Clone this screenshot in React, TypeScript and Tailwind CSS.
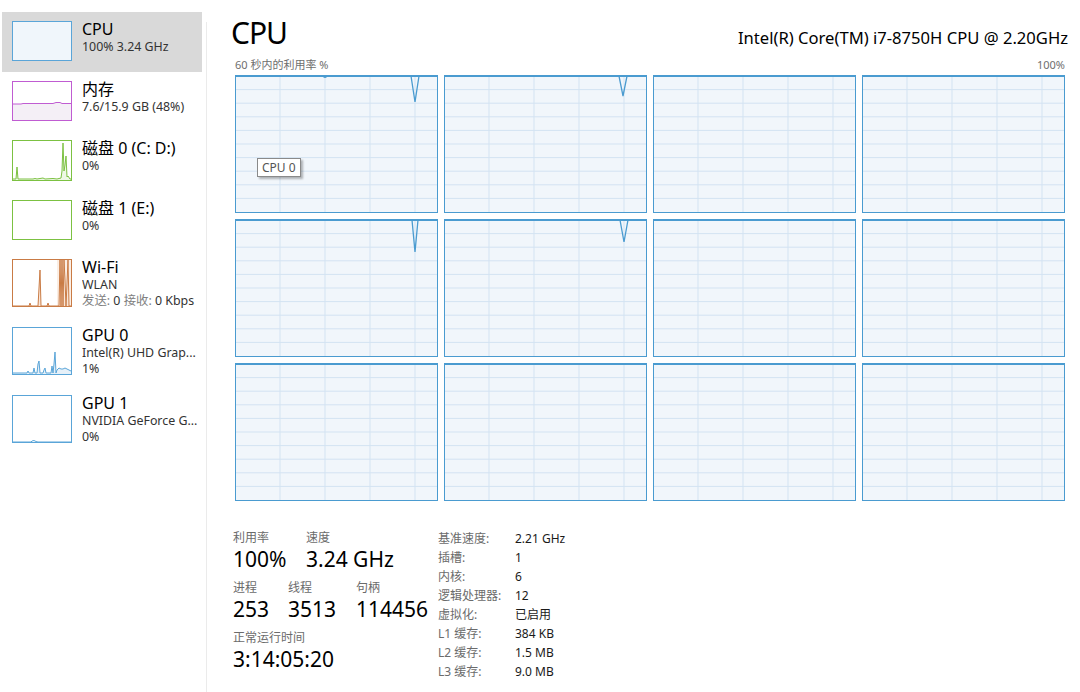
import React from 'react';

const FONT = "'Noto Sans', 'Noto Sans CJK SC', sans-serif";

type Dip = { x: number; depth: number; half: number };

const cells: { dip?: Dip; blip?: number }[] = [
  { dip: { x: 179, depth: 26, half: 4 }, blip: 89 },
  { dip: { x: 178, depth: 20, half: 4 } },
  {},
  {},
  { dip: { x: 179, depth: 32, half: 3 } },
  { dip: { x: 179, depth: 22, half: 4 } },
  {},
  {},
  {},
  {},
  {},
  {},
];

const GraphCell = ({ dip, blip, tooltip }: { dip?: Dip; blip?: number; tooltip?: boolean }) => {
  const hLines = [1, 2, 3, 4, 5, 6, 7, 8, 9].map((k) => (136 * k) / 10);
  const vLines = [44, 89, 134, 179];
  return (
    <div className="relative h-[138px] border border-[#4a9bd0] bg-[#f1f6fb]">
      <svg width="201" height="136" viewBox="0 0 201 136" className="block">
        {hLines.map((y) => (
          <line key={y} x1="0" x2="201" y1={y} y2={y} stroke="#d3e3f2" strokeWidth="1" />
        ))}
        {vLines.map((x) => (
          <line key={x} x1={x} x2={x} y1="0" y2="136" stroke="#d3e3f2" strokeWidth="1" />
        ))}
        <line x1="0" x2="201" y1="0.5" y2="0.5" stroke="#4a9bd0" strokeWidth="1" />
        {dip && (
          <polyline
            points={`${dip.x - dip.half},0 ${dip.x},${dip.depth} ${dip.x + dip.half},0`}
            fill="none"
            stroke="#4a9bd0"
            strokeWidth="1.3"
          />
        )}
        {blip && <path d={`M${blip - 3} 0 Q${blip} 3 ${blip + 3} 0`} fill="#4a9bd0" stroke="#4a9bd0" strokeWidth="1" />}
      </svg>
      {tooltip && (
        <div className="absolute left-[21px] top-[82px] border border-[#8a8a8a] bg-white px-[4px] text-[12px] leading-[17px] text-[#555] shadow-[2px_2px_2px_rgba(0,0,0,0.28)]">
          CPU 0
        </div>
      )}
    </div>
  );
};

const palette: Record<string, { border: string; fill: string }> = {
  cpu: { border: '#5aa5d8', fill: '#eef5fb' },
  mem: { border: '#c05cd2', fill: '#f4eff6' },
  disk0: { border: '#7cc142', fill: '#eef8e6' },
  disk1: { border: '#7cc142', fill: '#eef8e6' },
  wifi: { border: '#c97b45', fill: '#f9e6d8' },
  gpu0: { border: '#5aa5d8', fill: '#e6f0f8' },
  gpu1: { border: '#5aa5d8', fill: '#e6f0f8' },
};

const Thumb = ({ kind, h }: { kind: string; h: number }) => {
  const ih = h - 2;
  const c = palette[kind];
  let content: React.ReactNode = null;
  if (kind === 'mem') {
    content = (
      <>
        <path d={`M0 22 L8 22 L10 21.5 L40 21.5 L43 20.5 L47 20.5 L49 21.5 L58 21.5 L58 ${ih} L0 ${ih} Z`} fill={c.fill} />
        <polyline points="0,22 8,22 10,21.5 40,21.5 43,20.5 47,20.5 49,21.5 58,21.5" fill="none" stroke={c.border} strokeWidth="1" />
      </>
    );
  }
  if (kind === 'disk0') {
    const pts = '0,38 3,38 4,26 5,38 20,38 22,37.5 24,38 30,37 32,38 40,37.5 44,38 48,37 49,30 50,2 51,30 52,24 53,15 54,36 55,35 57,38 58,38';
    content = (
      <>
        <polygon points={`${pts} 58,39 0,39`} fill={c.fill} />
        <polyline points={pts} fill="none" stroke={c.border} strokeWidth="1" />
      </>
    );
  }
  if (kind === 'wifi') {
    const pts = '0,46 16,46 17,43 18,46 25,46 27,10 28,46 34,46 35,43 36,46 46,46 47,0 48,46 49,0 50,46 51,0 52,20 53,46 55,0 56,46 58,46';
    content = (
      <>
        <rect x="44" y="0" width="14" height="46" fill="#fbeee4" />
        <polygon points={`${pts} 58,46 0,46`} fill={c.fill} />
        <polyline points={pts} fill="none" stroke={c.border} strokeWidth="1" />
      </>
    );
  }
  if (kind === 'gpu0') {
    const pts = '0,45 14,45 15,43 16,45 20,45 21,40 22,45 24,45 25,36 26,33 27,45 30,45 31,42 32,40 33,45 38,45 39,38 40,45 41,36 42,24 43,45 44,42 46,40 48,41 50,41 52,40 54,41 56,42 58,43';
    content = (
      <>
        <polygon points={`${pts} 58,46 0,46`} fill={c.fill} />
        <polyline points={pts} fill="none" stroke={c.border} strokeWidth="1" />
      </>
    );
  }
  if (kind === 'gpu1') {
    content = <polyline points="0,46 18,46 19,45 21,44.5 23,45.5 25,46 58,46" fill="none" stroke={c.border} strokeWidth="1" />;
  }
  return (
    <div
      className="w-[60px] shrink-0 border"
      style={{ height: h, borderColor: c.border, backgroundColor: kind === 'cpu' ? '#f0f6fb' : '#ffffff' }}
    >
      <svg width="58" height={ih} viewBox={`0 0 58 ${ih}`} className="block">
        {content}
      </svg>
    </div>
  );
};

const SideItem = ({
  kind,
  thumbH,
  rowH,
  title,
  lines,
  selected,
}: {
  kind: string;
  thumbH: number;
  rowH: number;
  title: string;
  lines: React.ReactNode[];
  selected?: boolean;
}) => (
  <div
    className={`ml-[2px] flex w-[200px] items-start gap-[10px] pl-[10px] ${selected ? 'bg-[#d9d9d9]' : ''}`}
    style={{ height: rowH }}
  >
    <div className="pt-[9px]">
      <Thumb kind={kind} h={thumbH} />
    </div>
    <div className="min-w-0 flex-1 pt-[7px]">
      <div className="text-[16px] leading-[20px] text-black">{title}</div>
      {lines.map((l, i) => (
        <div key={i} className="truncate text-[12.4px] leading-[15.5px] text-[#333]">
          {l}
        </div>
      ))}
    </div>
  </div>
);

const Stat = ({ label, value, w }: { label: string; value: string; w: string }) => (
  <div className={w}>
    <div className="text-[12px] leading-[16px] text-[#6b6b6b]">{label}</div>
    <div className="mt-[1px] whitespace-nowrap text-[21px] leading-[24px] text-black">{value}</div>
  </div>
);

const specs: [string, string][] = [
  ['基准速度:', '2.21 GHz'],
  ['插槽:', '1'],
  ['内核:', '6'],
  ['逻辑处理器:', '12'],
  ['虚拟化:', '已启用'],
  ['L1 缓存:', '384 KB'],
  ['L2 缓存:', '1.5 MB'],
  ['L3 缓存:', '9.0 MB'],
];

export default function App() {
  return (
    <div className="flex h-[692px] w-[1080px] overflow-hidden bg-white" style={{ fontFamily: FONT }}>
      {/* Sidebar */}
      <div className="w-[206px] shrink-0 pt-[12px]">
        <SideItem kind="cpu" thumbH={40} rowH={60} title="CPU" lines={['100% 3.24 GHz']} selected />
        <SideItem kind="mem" thumbH={40} rowH={59} title="内存" lines={['7.6/15.9 GB (48%)']} />
        <SideItem kind="disk0" thumbH={41} rowH={60} title="磁盘 0 (C: D:)" lines={['0%']} />
        <SideItem kind="disk1" thumbH={40} rowH={59} title="磁盘 1 (E:)" lines={['0%']} />
        <SideItem
          kind="wifi"
          thumbH={48}
          rowH={68}
          title="Wi-Fi"
          lines={[
            'WLAN',
            <span key="s">
              <span className="text-[#808080]">发送:</span> 0 <span className="text-[#808080]">接收:</span> 0 Kbps
            </span>,
          ]}
        />
        <SideItem kind="gpu0" thumbH={48} rowH={68} title="GPU 0" lines={['Intel(R) UHD Grap...', '1%']} />
        <SideItem kind="gpu1" thumbH={48} rowH={68} title="GPU 1" lines={['NVIDIA GeForce G...', '0%']} />
      </div>
      <div className="mt-[22px] w-px shrink-0 bg-[#ebebeb]" />

      {/* Main */}
      <div className="flex-1 pl-[24px] pr-[12px] pt-[15px]">
        <div className="flex items-baseline justify-between">
          <div className="text-[30px] leading-[36px] tracking-[-1px] text-black">CPU</div>
          <div className="text-[16.6px] leading-[20px] text-black">Intel(R) Core(TM) i7-8750H CPU @ 2.20GHz</div>
        </div>
        <div className="mt-[7px] flex justify-between pl-[4px] pr-[3px] text-[11px] leading-[14px] text-[#6e6e6e]">
          <span>60 秒内的利用率 %</span>
          <span>100%</span>
        </div>
        <div className="ml-[4px] mr-[3px] mt-[3px] grid grid-cols-4 gap-[6px]">
          {cells.map((c, i) => (
            <GraphCell key={i} dip={c.dip} blip={c.blip} tooltip={i === 0} />
          ))}
        </div>

        <div className="mt-[28px] flex pl-[2px]">
          <div className="w-[205px] pt-[1px]">
            <div className="flex">
              <Stat label="利用率" value="100%" w="w-[73px]" />
              <Stat label="速度" value="3.24 GHz" w="flex-1" />
            </div>
            <div className="mt-[9px] flex">
              <Stat label="进程" value="253" w="w-[55px]" />
              <Stat label="线程" value="3513" w="w-[68px]" />
              <Stat label="句柄" value="114456" w="flex-1" />
            </div>
            <div className="mt-[9px]">
              <Stat label="正常运行时间" value="3:14:05:20" w="w-full" />
            </div>
          </div>
          <div className="text-[12px] leading-[19px]">
            {specs.map(([k, v]) => (
              <div key={k} className="flex">
                <span className="w-[77px] text-[#6b6b6b]">{k}</span>
                <span className="text-[#1a1a1a]">{v}</span>
              </div>
            ))}
          </div>
        </div>
      </div>
    </div>
  );
}
